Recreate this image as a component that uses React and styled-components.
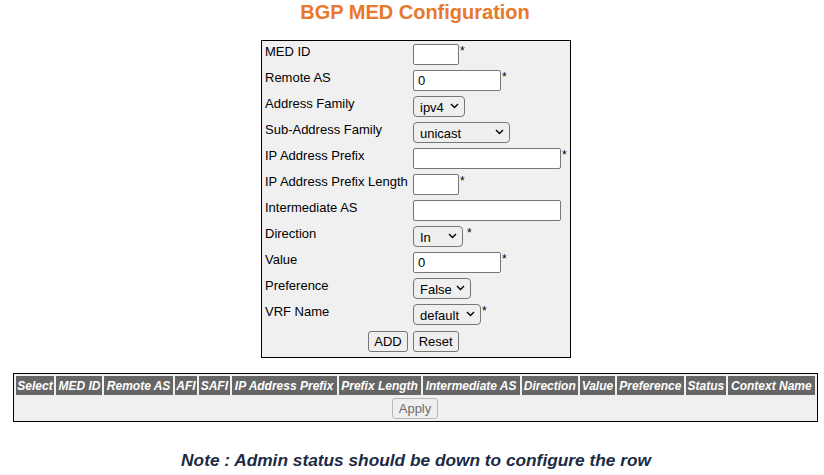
import styled, { createGlobalStyle } from "styled-components";

const Global = createGlobalStyle`
  html, body {
    margin: 0;
    padding: 0;
    background: #ffffff;
    font-family: "Liberation Sans", Arial, sans-serif;
  }
`;

const Page = styled.div`
  width: 824px;
  display: flex;
  flex-direction: column;
  align-items: center;
`;

const Title = styled.h1`
  margin: 0 0 0 6px;
  font-size: 20px;
  font-weight: bold;
  color: #e8782a;
  line-height: 24px;
`;

const FormBox = styled.div`
  box-sizing: border-box;
  margin: 16px 0 0 8px;
  width: 310px;
  padding: 2px 2px 2px 3px;
  border: 1px solid #000;
  background: #f0f0f0;
  display: grid;
  grid-template-columns: 148px auto;
  grid-auto-rows: 26px;
`;

const Label = styled.div`
  font-size: 13px;
  color: #000;
  line-height: 16px;
  padding-top: 1px;
`;

const Field = styled.div`
  display: flex;
  align-items: flex-start;
  padding-top: 1px;
`;

const TextInput = styled.input`
  box-sizing: border-box;
  width: ${({ $w }) => $w}px;
  height: 21px;
  border: 1px solid #767676;
  border-radius: 2px;
  background: #fff;
  font: 13px "Liberation Sans", Arial, sans-serif;
  padding: 1px 4px;
  margin: 0;
`;

const SelectWrap = styled.span`
  position: relative;
  display: inline-block;
  width: ${({ $w }) => $w}px;
  height: 21px;
`;

const Select = styled.select`
  appearance: none;
  box-sizing: border-box;
  width: 100%;
  height: 21px;
  border: 1px solid #767676;
  border-radius: 4px;
  background: #efefef;
  font: 13px "Liberation Sans", Arial, sans-serif;
  color: #000;
  margin: 0;
  padding: 1px 0 0 6px;
`;

const Chevron = styled.svg`
  position: absolute;
  right: 6px;
  top: 7px;
  width: 9px;
  height: 6px;
  pointer-events: none;
`;

const Star = styled.span`
  font-size: 12px;
  color: #000;
  margin-left: ${({ $gap }) => $gap || 1}px;
  line-height: 14px;
`;

const ButtonRow = styled.div`
  grid-column: 1 / 3;
  display: flex;
  justify-content: center;
  gap: 5px;
  padding-top: 2px;
  padding-right: 6px;
`;

const Btn = styled.button`
  box-sizing: border-box;
  height: 21px;
  padding: 0 5px;
  border: 1px solid #767676;
  border-radius: 3px;
  background: #efefef;
  color: #000;
  font: 13px "Liberation Sans", Arial, sans-serif;
`;

const TableWrap = styled.div`
  margin: 15px 0 0 6px;
  width: 805px;
  box-sizing: border-box;
  border: 1px solid #000;
  background: #f0f0f0;
`;

const Table = styled.table`
  width: 100%;
  border-collapse: separate;
  border-spacing: 2px;
`;

const Th = styled.th`
  background: #666666;
  color: #ffffff;
  font: italic bold 12px "Liberation Sans", Arial, sans-serif;
  height: 19px;
  padding: 0 1px;
  white-space: nowrap;
`;

const ApplyCell = styled.td`
  text-align: center;
  padding: 1px 0 0;
`;

const ApplyBtn = styled(Btn)`
  color: #6d6d6d;
  border-color: #b8b8b8;
  padding: 0 6px;
`;

const Note = styled.p`
  margin: 28px 0 0 8px;
  font: italic bold 17.3px "Liberation Sans", Arial, sans-serif;
  color: #1b2b45;
`;

const headers = [
  "Select",
  "MED ID",
  "Remote AS",
  "AFI",
  "SAFI",
  "IP Address Prefix",
  "Prefix Length",
  "Intermediate AS",
  "Direction",
  "Value",
  "Preference",
  "Status",
  "Context Name",
];

function Drop({ w, value, options }) {
  return (
    <SelectWrap $w={w}>
      <Select defaultValue={value}>
        {options.map((o) => (
          <option key={o}>{o}</option>
        ))}
      </Select>
      <Chevron viewBox="0 0 9 6">
        <path d="M1 1 L4.5 4.5 L8 1" fill="none" stroke="#000" strokeWidth="1.4" />
      </Chevron>
    </SelectWrap>
  );
}

export default function App() {
  return (
    <Page>
      <Global />
      <Title>BGP MED Configuration</Title>
      <FormBox>
        <Label>MED ID</Label>
        <Field>
          <TextInput $w={46} />
          <Star>*</Star>
        </Field>
        <Label>Remote AS</Label>
        <Field>
          <TextInput $w={88} defaultValue="0" />
          <Star>*</Star>
        </Field>
        <Label>Address Family</Label>
        <Field>
          <Drop w={52} value="ipv4" options={["ipv4", "ipv6"]} />
        </Field>
        <Label>Sub-Address Family</Label>
        <Field>
          <Drop w={97} value="unicast" options={["unicast", "multicast"]} />
        </Field>
        <Label>IP Address Prefix</Label>
        <Field>
          <TextInput $w={148} />
          <Star>*</Star>
        </Field>
        <Label>IP Address Prefix Length</Label>
        <Field>
          <TextInput $w={46} />
          <Star>*</Star>
        </Field>
        <Label>Intermediate AS</Label>
        <Field>
          <TextInput $w={148} />
        </Field>
        <Label>Direction</Label>
        <Field>
          <Drop w={50} value="In" options={["In", "Out"]} />
          <Star $gap={4}>*</Star>
        </Field>
        <Label>Value</Label>
        <Field>
          <TextInput $w={88} defaultValue="0" />
          <Star>*</Star>
        </Field>
        <Label>Preference</Label>
        <Field>
          <Drop w={58} value="False" options={["False", "True"]} />
        </Field>
        <Label>VRF Name</Label>
        <Field>
          <Drop w={68} value="default" options={["default"]} />
          <Star>*</Star>
        </Field>
        <ButtonRow>
          <Btn>ADD</Btn>
          <Btn>Reset</Btn>
        </ButtonRow>
      </FormBox>
      <TableWrap>
        <Table>
          <thead>
            <tr>
              {headers.map((h) => (
                <Th key={h}>{h}</Th>
              ))}
            </tr>
          </thead>
          <tbody>
            <tr>
              <ApplyCell colSpan={headers.length}>
                <ApplyBtn disabled>Apply</ApplyBtn>
              </ApplyCell>
            </tr>
          </tbody>
        </Table>
      </TableWrap>
      <Note>Note : Admin status should be down to configure the row</Note>
    </Page>
  );
}
